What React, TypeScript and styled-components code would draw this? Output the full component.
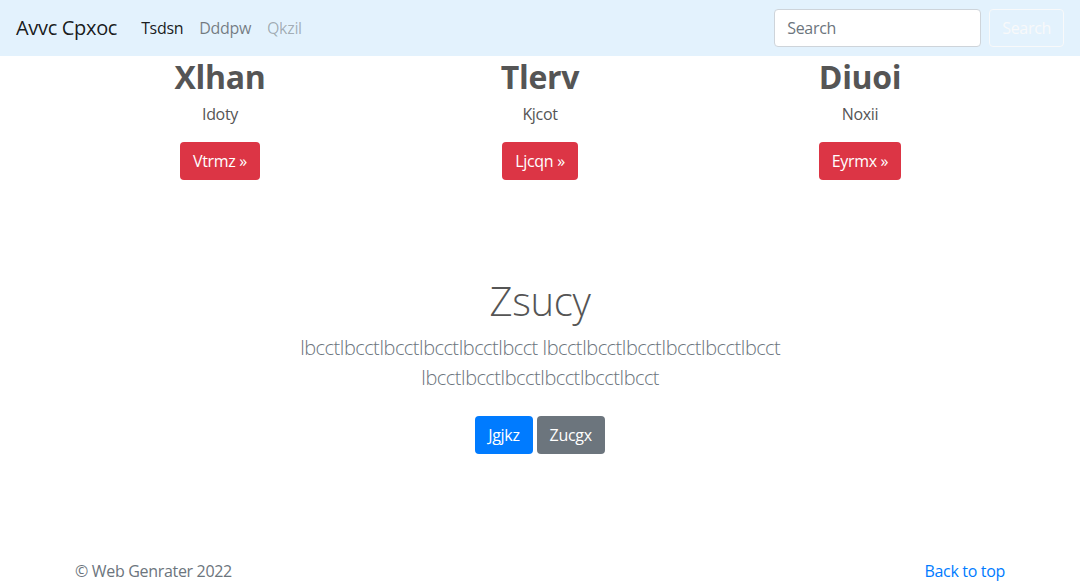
import React from "react";
import styled, { createGlobalStyle } from "styled-components";

const GlobalStyle = createGlobalStyle`
  * { box-sizing: border-box; }
  html, body { margin: 0; padding: 0; background: #fff; }
  body {
    font-family: "Open Sans", "Noto Sans", "Liberation Sans", sans-serif;
    font-size: 16px;
    line-height: 1.5;
    letter-spacing: -0.02em;
    color: #555;
  }
`;

const Navbar = styled.nav`
  height: 56px;
  background: #e3f2fd;
  display: flex;
  align-items: center;
  padding: 8px 16px;
`;

const Brand = styled.a`
  font-size: 20px;
  line-height: 30px;
  color: rgba(0, 0, 0, 0.9);
  text-decoration: none;
  margin-right: 16px;
`;

const NavList = styled.ul`
  display: flex;
  list-style: none;
  margin: 0;
  padding: 0;
  flex: 1;
`;

const NavLink = styled.a<{ $state: "active" | "normal" | "disabled" }>`
  display: block;
  padding: 8px;
  text-decoration: none;
  color: ${(p) =>
    p.$state === "active"
      ? "rgba(0,0,0,0.9)"
      : p.$state === "disabled"
      ? "rgba(0,0,0,0.3)"
      : "rgba(0,0,0,0.5)"};
`;

const SearchForm = styled.form`
  display: flex;
  align-items: center;
  gap: 8px;
`;

const SearchInput = styled.input`
  width: 207px;
  height: 38px;
  padding: 6px 12px;
  font: inherit;
  letter-spacing: inherit;
  color: #495057;
  background: #fff;
  border: 1px solid #ced4da;
  border-radius: 4px;
  &::placeholder { color: #6c757d; }
`;

const OutlineLightButton = styled.button`
  height: 38px;
  padding: 6px 12px;
  font: inherit;
  letter-spacing: inherit;
  color: #f8f9fa;
  background: transparent;
  border: 1px solid #f8f9fa;
  border-radius: 4px;
`;

const Container = styled.div`
  width: 960px;
  margin: 0 auto;
`;

const Row = styled.div`
  display: grid;
  grid-template-columns: repeat(3, 1fr);
`;

const Col = styled.div`
  padding: 0 15px;
  text-align: center;
`;

const ColHeading = styled.h2`
  font-size: 32px;
  font-weight: 700;
  line-height: 1.2;
  margin: 2px 0 6px;
  color: #555;
`;

const ColText = styled.p`
  margin: 0 0 16px;
`;

const Btn = styled.a<{ $variant: "danger" | "primary" | "secondary" }>`
  display: inline-block;
  padding: 6px 12px;
  font-size: 16px;
  line-height: 24px;
  border-radius: 4px;
  border: 1px solid transparent;
  color: #fff;
  text-decoration: none;
  background: ${(p) =>
    p.$variant === "danger" ? "#dc3545" : p.$variant === "primary" ? "#007bff" : "#6c757d"};
`;

const Jumbotron = styled.section`
  padding: 81px 0 48px;
  text-align: center;
`;

const Narrow = styled.div`
  max-width: 610px;
  margin: 0 auto;
`;

const JumboHeading = styled.h1`
  font-size: 40px;
  font-weight: 300;
  line-height: 1.2;
  margin: 0 0 8px;
  color: #555;
`;

const Lead = styled.p`
  font-size: 20px;
  font-weight: 300;
  line-height: 1.5;
  letter-spacing: -0.03em;
  color: #6c757d;
  margin: 0 0 16px;
`;

const ButtonLine = styled.p`
  margin: 0;
  display: flex;
  justify-content: center;
  gap: 4px;
  padding: 7px 0 9px;
`;

const Footer = styled.footer`
  padding: 48px 15px;
  width: 960px;
  margin: 0 auto;
  display: flex;
  justify-content: space-between;
  color: #6c757d;
`;

const FooterText = styled.p`
  margin: 0 0 16px;
`;

const FooterLink = styled.a`
  color: #007bff;
  text-decoration: none;
`;

export default function App() {
  const cols = [
    { h: "Xlhan", t: "Idoty", b: "Vtrmz »" },
    { h: "Tlerv", t: "Kjcot", b: "Ljcqn »" },
    { h: "Diuoi", t: "Noxii", b: "Eyrmx »" },
  ];
  return (
    <>
      <GlobalStyle />
      <Navbar>
        <Brand href="#">Avvc Cpxoc</Brand>
        <NavList>
          <li><NavLink $state="active" href="#">Tsdsn</NavLink></li>
          <li><NavLink $state="normal" href="#">Dddpw</NavLink></li>
          <li><NavLink $state="disabled" href="#">Qkzil</NavLink></li>
        </NavList>
        <SearchForm onSubmit={(e) => e.preventDefault()}>
          <SearchInput type="search" placeholder="Search" />
          <OutlineLightButton type="submit">Search</OutlineLightButton>
        </SearchForm>
      </Navbar>
      <Container>
        <Row>
          {cols.map((c) => (
            <Col key={c.h}>
              <ColHeading>{c.h}</ColHeading>
              <ColText>{c.t}</ColText>
              <ColText>
                <Btn $variant="danger" href="#">{c.b}</Btn>
              </ColText>
            </Col>
          ))}
        </Row>
      </Container>
      <Jumbotron>
        <Narrow>
          <JumboHeading>Zsucy</JumboHeading>
          <Lead>
            IbcctIbcctIbcctIbcctIbcctIbcct IbcctIbcctIbcctIbcctIbcctIbcct IbcctIbcctIbcctIbcctIbcctIbcct
          </Lead>
          <ButtonLine>
            <Btn $variant="primary" href="#">Jgjkz</Btn>
            <Btn $variant="secondary" href="#">Zucgx</Btn>
          </ButtonLine>
        </Narrow>
      </Jumbotron>
      <Footer>
        <FooterText>© Web Genrater 2022</FooterText>
        <FooterText>
          <FooterLink href="#">Back to top</FooterLink>
        </FooterText>
      </Footer>
    </>
  );
}
